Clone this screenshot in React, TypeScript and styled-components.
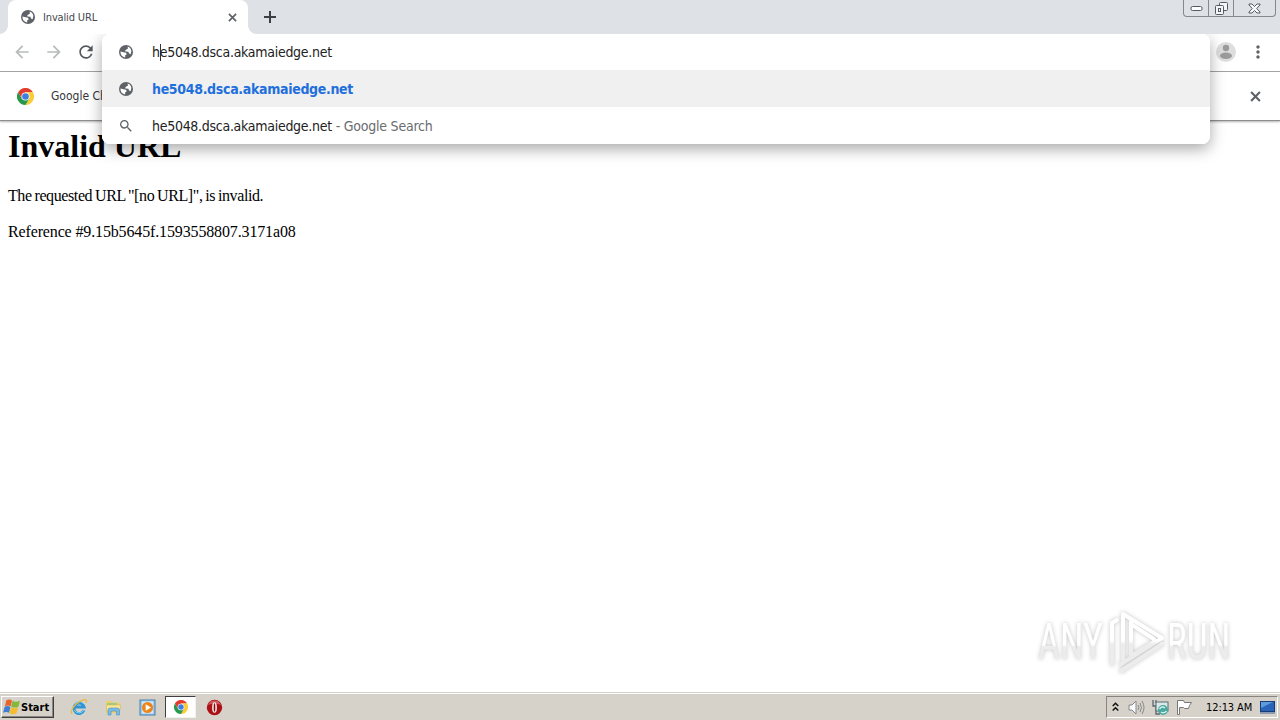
import React from 'react';
import styled, { createGlobalStyle } from 'styled-components';
import { MdArrowBack, MdArrowForward, MdMoreVert, MdRefresh, MdSearch } from 'react-icons/md';

const uiFont = '"DejaVu Sans Condensed", "DejaVu Sans", sans-serif';

const GlobalStyle = createGlobalStyle`
  * {
    box-sizing: border-box;
  }

  body {
    margin: 0;
    overflow: hidden;
    background: #fff;
  }
`;

const Desktop = styled.div`
  position: relative;
  display: flex;
  flex-direction: column;
  width: 1280px;
  height: 720px;
  overflow: hidden;
  background: #fff;
  font-family: ${uiFont};
  font-stretch: condensed;
`;

const Text = styled.span<{ $size: number; $spacing?: number; $color?: string; $bold?: boolean }>`
  font-size: ${({ $size }) => $size}px;
  letter-spacing: ${({ $spacing = 0 }) => $spacing}px;
  color: ${({ $color = '#222' }) => $color};
  font-weight: ${({ $bold }) => ($bold ? 700 : 400)};
  white-space: pre;
`;

const TabStrip = styled.header`
  display: flex;
  flex: none;
  height: 34px;
  padding-left: 8px;
  background: #dee1e6;
`;

const Tab = styled.div`
  position: relative;
  display: flex;
  align-items: center;
  width: 240px;
  padding: 0 9px 0 12px;
  color: #5f6368;
  background: #fff;
  border-radius: 8px 8px 0 0;

  &::before,
  &::after {
    content: '';
    position: absolute;
    bottom: 0;
    width: 8px;
    height: 8px;
  }

  &::before {
    left: -8px;
    background: radial-gradient(circle at 0 0, #dee1e6 7.5px, #fff 8px);
  }

  &::after {
    right: -8px;
    background: radial-gradient(circle at 100% 0, #dee1e6 7.5px, #fff 8px);
  }
`;

const TabTitle = styled(Text)`
  flex: 1;
  margin-left: 7px;
`;

const NewTab = styled.div`
  display: flex;
  align-items: center;
  margin-left: 16px;
`;

const WindowButtons = styled.div`
  display: flex;
  height: 17px;
  margin: 0 4px 0 auto;
  border: 1px solid #84888f;
  border-top: 0;
  border-radius: 0 0 4px 4px;
`;

const WindowButton = styled.div<{ $width: number }>`
  display: flex;
  align-items: center;
  justify-content: center;
  width: ${({ $width }) => $width}px;

  & + & {
    border-left: 1px solid #84888f;
  }
`;

const Toolbar = styled.div`
  display: flex;
  flex: none;
  align-items: center;
  gap: 12px;
  height: 38px;
  padding: 0 12px 1px;
  color: #5f6368;
  border-bottom: 1px solid #a6a6a6;
`;

const NavIcon = styled.span<{ $disabled?: boolean }>`
  display: flex;
  color: ${({ $disabled }) => ($disabled ? '#b8babc' : '#55595e')};
`;

const ProfileArea = styled.div`
  display: flex;
  align-items: center;
  gap: 12px;
  margin-left: auto;
`;

const InfoBar = styled.div`
  display: flex;
  flex: none;
  align-items: center;
  gap: 17px;
  height: 49px;
  padding: 0 19px 0 17px;
  color: #5f6368;
  border-bottom: 1px solid #8e8e8e;
  box-shadow: 0 1px 2px rgba(0, 0, 0, 0.3);
  z-index: 1;

  & > :last-child {
    margin-left: auto;
  }
`;

const Omnibox = styled.div`
  position: absolute;
  top: 34px;
  left: 102px;
  z-index: 2;
  width: 1108px;
  height: 110px;
  overflow: hidden;
  background: #fff;
  border-radius: 8px;
`;

const OmniboxShadow = styled(Omnibox)`
  z-index: 1;
  box-shadow: 0 5px 15px rgba(0, 0, 0, 0.34);
  clip-path: inset(0 -30px -30px -30px);
  overflow: visible;
`;

const OmniboxRow = styled.div<{ $selected?: boolean }>`
  display: flex;
  align-items: center;
  height: 37px;
  padding-left: 16px;
  color: #5f6368;
  background: ${({ $selected }) => ($selected ? '#f0f0f0' : '#fff')};

  &:first-child {
    height: 36px;
  }

  svg {
    margin-right: 18px;
  }
`;

const Caret = styled.span`
  width: 1px;
  height: 17px;
  margin: 0 -1px 0 0;
  background: #333;
`;

const Page = styled.main`
  flex: 1;
  padding: 8px;
  font: 16px "Liberation Serif", serif;
  font-stretch: normal;
  color: #000;
`;

const Heading = styled.h1`
  margin: 0;
  font-size: 32px;
  line-height: 35px;
`;

const Paragraph = styled.p<{ $spacing: number; $wordSpacing?: number }>`
  margin: 0 0 18px;
  line-height: 18px;
  letter-spacing: ${({ $spacing }) => $spacing}px;
  word-spacing: ${({ $wordSpacing = 0 }) => $wordSpacing}px;

  ${Heading} + & {
    margin-top: 23px;
  }
`;

const Watermark = styled.svg`
  position: absolute;
  left: 1030px;
  top: 602px;
  filter: drop-shadow(0 0 2px rgba(0, 0, 0, 0.24));
`;

const Taskbar = styled.footer`
  display: flex;
  flex: none;
  align-items: center;
  height: 28px;
  padding: 1px 2px 0 1px;
  background: #d6d2ca;
  border-top: 1px solid #d6d2ca;
  box-shadow: inset 0 1px #fff;
`;

const StartButton = styled.div`
  display: flex;
  align-items: center;
  width: 53px;
  height: 22px;
  padding-left: 1px;
  border: 1px solid;
  border-color: #fff #404040 #404040 #fff;
  box-shadow: inset -1px -1px #8b8881;
`;

const QuickLaunch = styled.div`
  display: flex;
  align-items: center;
  margin-left: 8px;
`;

const TaskButton = styled.div<{ $active?: boolean }>`
  display: flex;
  align-items: center;
  justify-content: center;
  width: ${({ $active }) => ($active ? 31 : 34)}px;
  height: 22px;
  margin: ${({ $active }) => ($active ? '0 1px 0 1px' : 0)};
  background: ${({ $active }) => ($active ? '#fff' : 'none')};
  border: ${({ $active }) => ($active ? '1px solid' : 0)};
  border-color: #404040 #f3f1ec #f3f1ec #404040;
`;

const Tray = styled.div`
  display: flex;
  align-items: center;
  width: 172px;
  height: 22px;
  margin-left: auto;
  padding-left: 5px;
  border: 1px solid;
  border-color: #88857e #fff #fff #88857e;
`;

const TrayIcons = styled.div`
  display: flex;
  align-items: center;
  gap: 7px;
  width: 94px;
`;

const GlobeIcon = ({ size = 16 }: { size?: number }) => (
    <svg width={size} height={size} viewBox="0 0 16 16">
        <circle cx="8" cy="8" r="7" fill="#5f6368"/>
        <path d="M2.4 7.6 5.6 8.3Q8.6 8.4 8.6 10.4L7.2 11.2V13.6Q2.6 12.9 2.4 7.6Z" fill="#fff"/>
        <path d="M9.6 2.6 10 4.4 8.4 5.6 7.2 6.4 7.4 7.5 10.4 7.8 11 9.6 12.6 10.2Q14.3 7.4 12.8 5L11.6 3.6Z" fill="#fff"/>
    </svg>
);

const CloseIcon = ({ size }: { size: number }) => (
    <svg width={size} height={size} viewBox="0 0 10 10">
        <path d="M1 1 9 9M9 1 1 9" stroke="#5f6368" strokeWidth="1.9"/>
    </svg>
);

const ChromeLogo = ({ size }: { size: number }) => (
    <svg width={size} height={size} viewBox="0 0 18 18">
        <path d="M1.2 4.5A9 9 0 0 1 16.8 4.5H9L5.1 11.25Z" fill="#e33b2e"/>
        <path d="M16.8 4.5A9 9 0 0 1 9 18L12.9 11.25 9 4.5Z" fill="#fbcc34"/>
        <path d="M9 18A9 9 0 0 1 1.2 4.5L5.1 11.25H12.9Z" fill="#26984b"/>
        <circle cx="9" cy="9" r="4.3" fill="#fff"/>
        <circle cx="9" cy="9" r="3.5" fill="#3f7de0"/>
    </svg>
);

const WindowsFlag = () => (
    <svg width="18" height="18" viewBox="0 0 17 17">
        <path d="M3.2 2.2Q6 .5 8.5 2.3L7.3 7.8Q4.5 6.2 1.8 7.7Z" fill="#e8622b"/>
        <path d="M9 2.7Q12 4.3 16 2.7L14.5 8.2Q11 9.8 7.8 8.2Z" fill="#83b83b"/>
        <path d="M1.6 8.3Q4.2 6.8 7 8.4L5.7 14Q3 12.5.1 14Z" fill="#3f7ed0"/>
        <path d="M7.6 8.8Q10.8 10.6 14.3 8.8L12.8 14.5Q9.5 16.3 6.2 14.5Z" fill="#f4bd2b"/>
    </svg>
);

const ExplorerIcon = () => (
    <svg width="18" height="18" viewBox="0 0 18 18" fill="none">
        <path d="M14 12.3A5.2 5.2 0 1 1 14.2 9H4.8" stroke="#2c95d8" strokeWidth="2.8"/>
        <path d="M14 12A5.6 5.6 0 0 1 4.2 12M4 6.5A6 6 0 0 1 14 6" stroke="#7fd2f2" strokeWidth="1"/>
        <path d="M2 15.8C-.5 13 5 5.3 12 2.4 16 .7 17.5 2.4 15.8 5" stroke="#ecb93a" strokeWidth="1.3"/>
    </svg>
);

const FolderIcon = () => (
    <svg width="17" height="17" viewBox="0 0 17 17">
        <path d="M1 2H7L8.5 3.5H15V14H1Z" fill="#edcf70"/>
        <path d="M2 4H12V7H2Z" fill="#9dcc83"/>
        <path d="M1.5 6H15.5L15 12H1.5Z" fill="#f9e79b" stroke="#d8b653" strokeWidth=".6"/>
        <path d="M3 16V11Q3 9 5 9H12Q14.5 9 14.5 11V16H11.5V12H6V16Z" fill="#78bce8" stroke="#4c91bd" strokeWidth=".6"/>
    </svg>
);

const MediaIcon = () => (
    <svg width="17" height="17" viewBox="0 0 17 17">
        <rect x="1" y="1" width="15" height="15" fill="#9ccaf0" stroke="#447fae"/>
        <rect x="3" y="2.5" width="11" height="12" fill="#d4eafa"/>
        <circle cx="8.5" cy="8.5" r="5.6" fill="#ed851b"/>
        <path d="M6.7 5.3V11.7L12 8.5Z" fill="#fff"/>
    </svg>
);

const OperaIcon = () => (
    <svg width="17" height="17" viewBox="0 0 17 17">
        <circle cx="8.5" cy="8.5" r="7.7" fill="#ac1017"/>
        <path d="M2 6A7 7 0 0 1 15 6Q8.5 3 2 6" fill="#d0565b"/>
        <ellipse cx="8.5" cy="8.5" rx="2.4" ry="5.3" fill="#f7e9e8"/>
        <ellipse cx="8.5" cy="8.5" rx=".8" ry="4.3" fill="#8c0a10"/>
    </svg>
);

const VolumeIcon = () => (
    <svg width="17" height="17" viewBox="0 0 17 17" fill="none" stroke="#85888a">
        <path d="M1 6H4L8 2V15L4 11H1Z" fill="#fafafa"/>
        <path d="M10 6Q12 8.5 10 11M12 4Q15 8.5 12 13M14 2Q18 8.5 14 15"/>
    </svg>
);

const NetworkIcon = () => (
    <svg width="17" height="17" viewBox="0 0 17 17">
        <path d="M1 1V7H4V15H8M4 1V4" fill="none" stroke="#5c6670" strokeWidth="1.3"/>
        <rect x="4" y="3" width="12" height="9" fill="#dbe8e8" stroke="#586b72"/>
        <circle cx="11" cy="11" r="5" fill="#4aa7a0"/>
        <path d="M7.5 10Q10 6.5 13 9M14.5 12Q12 15 9 13" fill="none" stroke="#d0f0e7" strokeWidth="1.4"/>
    </svg>
);

const FlagIcon = () => (
    <svg width="17" height="17" viewBox="0 0 17 17" stroke="#777" fill="#fff">
        <path d="M1.5 1.5H7.5L8.5 3.5H15.5L13.5 6.5 12.5 9.5H8.5L7.5 8.5H3.5V15.5H1.5Z"/>
    </svg>
);

const DesktopIcon = () => (
    <svg width="15" height="13" viewBox="0 0 15 13">
        <rect x=".5" y=".5" width="14" height="10" fill="#2864b8" stroke="#173c78"/>
        <path d="M1 1H13L1 7Z" fill="#5e9bdd"/>
        <path d="M0 12H15" stroke="#7589a8" strokeWidth="1.5"/>
    </svg>
);

const AnyRunMark = () => (
    <Watermark width="210" height="78" viewBox="0 0 210 78">
        <defs>
            <linearGradient id="fade" gradientUnits="userSpaceOnUse" x1="0" y1="0" x2="0" y2="78">
                <stop offset=".5" stopColor="#fff"/>
                <stop offset=".54" stopColor="#ececec"/>
            </linearGradient>
            <linearGradient id="textFade" x1="0" y1="0" x2="0" y2="1">
                <stop offset=".55" stopColor="#fff"/>
                <stop offset=".58" stopColor="#ececec"/>
            </linearGradient>
        </defs>
        <g fill="url(#textFade)" fontFamily="Roboto, sans-serif" fontWeight="400" fontSize="50">
            <text transform="translate(8 57) scale(.76 1)">ANY</text>
            <text transform="translate(137 57) scale(.74 1)">RUN</text>
        </g>
        <g fill="none" stroke="url(#fade)" strokeWidth="4" strokeLinejoin="round" strokeLinecap="round">
            <path d="M87 18 82 21V62"/>
            <path d="M101 20V54L124 40M93 58V12L132 36 91 62"/>
            <path d="M101 22 124 37" stroke="#fff"/>
            <path d="M91 69 132 42"/>
        </g>
    </Watermark>
);

export default function App() {
    return (
        <Desktop>
            <GlobalStyle/>
            <TabStrip>
                <Tab>
                    <GlobeIcon/>
                    <TabTitle $size={11} $spacing={-0.15} $color="#45494d">Invalid URL</TabTitle>
                    <svg width="2" height="1"/>
                    <CloseIcon size={9}/>
                    <svg width="2" height="1"/>
                </Tab>
                <NewTab>
                    <svg width="12" height="12"><path d="M0 6H12M6 0V12" stroke="#3c4043" strokeWidth="2"/></svg>
                </NewTab>
                <WindowButtons>
                    <WindowButton $width={24}>
                        <svg width="13" height="5"><rect x="1" y=".5" width="11" height="4" rx="1.5" fill="#fff" stroke="#555b66"/></svg>
                    </WindowButton>
                    <WindowButton $width={25}>
                        <svg width="13" height="13" fill="#f4f5f7" stroke="#555b66">
                            <rect x="4.5" y=".5" width="8" height="8" rx="1"/>
                            <rect x=".5" y="3.5" width="8" height="9" rx="1"/>
                            <rect x="3.5" y="6.5" width="2" height="3"/>
                        </svg>
                    </WindowButton>
                    <WindowButton $width={42}>
                        <svg width="13" height="11"><path d="M1 1H4L6.5 3.5 9 1H12V2L8.7 5.5 12 9V10H9L6.5 7.5 4 10H1V9L4.3 5.5 1 2Z" fill="#f8f8f8" stroke="#555b66"/></svg>
                    </WindowButton>
                </WindowButtons>
            </TabStrip>
            <Toolbar>
                <NavIcon $disabled><MdArrowBack size={20}/></NavIcon>
                <NavIcon $disabled><MdArrowForward size={20}/></NavIcon>
                <NavIcon><MdRefresh size={20}/></NavIcon>
                <ProfileArea>
                    <svg width="20" height="20" viewBox="0 0 20 20">
                        <circle cx="10" cy="10" r="10" fill="#dedede"/>
                        <circle cx="10" cy="6" r="3.2" fill="#9b9b9b"/>
                        <ellipse cx="10" cy="13.8" rx="6" ry="3.2" fill="#9b9b9b"/>
                    </svg>
                    <MdMoreVert size={20}/>
                </ProfileArea>
            </Toolbar>
            <InfoBar>
                <ChromeLogo size={17}/>
                <Text $size={12} $color="#34373a">Google Chrome</Text>
                <CloseIcon size={11}/>
            </InfoBar>
            <Page>
                <Heading>Invalid URL</Heading>
                <Paragraph $spacing={-0.4} $wordSpacing={-0.8}>The requested URL "[no URL]", is invalid.</Paragraph>
                <Paragraph $spacing={-0.14}>Reference #9.15b5645f.1593558807.3171a08</Paragraph>
            </Page>
            <Taskbar>
                <StartButton>
                    <WindowsFlag/>
                    <Text $size={11} $color="#000" $bold>Start</Text>
                </StartButton>
                <QuickLaunch>
                    <TaskButton><ExplorerIcon/></TaskButton>
                    <TaskButton><FolderIcon/></TaskButton>
                    <TaskButton><MediaIcon/></TaskButton>
                    <TaskButton $active><ChromeLogo size={14}/></TaskButton>
                    <TaskButton><OperaIcon/></TaskButton>
                </QuickLaunch>
                <Tray>
                    <TrayIcons>
                        <svg width="9" height="10" fill="none" stroke="#111" strokeWidth="1.5"><path d="M.7 4L3.5 1.2 6.3 4M.7 8.5L3.5 5.7 6.3 8.5"/></svg>
                        <VolumeIcon/>
                        <NetworkIcon/>
                        <FlagIcon/>
                    </TrayIcons>
                    <Text $size={11} $spacing={-0.1} $color="#000">12:13 AM</Text>
                    <svg width="8" height="1"/>
                    <DesktopIcon/>
                </Tray>
            </Taskbar>
            <OmniboxShadow/>
            <Omnibox>
                <OmniboxRow>
                    <GlobeIcon/>
                    <Text $size={14} $spacing={-0.28}>h</Text>
                    <Caret/>
                    <Text $size={14} $spacing={-0.28}>e5048.dsca.akamaiedge.net</Text>
                </OmniboxRow>
                <OmniboxRow $selected>
                    <GlobeIcon/>
                    <Text $size={14} $spacing={-0.32} $color="#1f6fdc" $bold>he5048.dsca.akamaiedge.net</Text>
                </OmniboxRow>
                <OmniboxRow>
                    <MdSearch size={16}/>
                    <Text $size={14} $spacing={-0.28}>he5048.dsca.akamaiedge.net</Text>
                    <Text $size={14} $spacing={-0.22} $color="#696c70"> - Google Search</Text>
                </OmniboxRow>
            </Omnibox>
            <AnyRunMark/>
        </Desktop>
    );
}
